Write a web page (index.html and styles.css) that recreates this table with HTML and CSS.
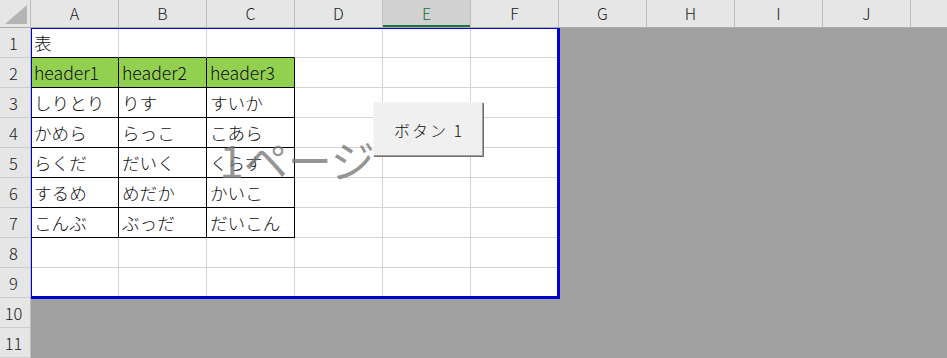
FILE: index.html
```html
<!DOCTYPE html>
<html lang="ja">
<head>
<meta charset="utf-8">
<title>Sheet</title>
<link rel="stylesheet" href="styles.css">
</head>
<body>
<div class="sheet">
  <div class="corner"><span class="tri"></span></div>
  <div class="colheads">
    <div class="ch">A</div><div class="ch">B</div><div class="ch">C</div><div class="ch">D</div>
    <div class="ch sel">E</div><div class="ch">F</div><div class="ch">G</div><div class="ch">H</div>
    <div class="ch">I</div><div class="ch">J</div><div class="ch"></div>
  </div>
  <div class="rowheads">
    <div class="rh">1</div><div class="rh">2</div><div class="rh">3</div><div class="rh">4</div>
    <div class="rh">5</div><div class="rh">6</div><div class="rh">7</div><div class="rh">8</div>
    <div class="rh">9</div><div class="rh">10</div><div class="rh">11</div>
  </div>
  <div class="area">
    <div class="page">
      <div class="c">表</div><div class="c"></div><div class="c"></div><div class="c"></div><div class="c"></div><div class="c"></div>
      <div class="c t hd">header1</div><div class="c t hd">header2</div><div class="c t hd">header3</div><div class="c"></div><div class="c"></div><div class="c"></div>
      <div class="c t">しりとり</div><div class="c t">りす</div><div class="c t">すいか</div><div class="c"></div><div class="c"></div><div class="c"></div>
      <div class="c t">かめら</div><div class="c t">らっこ</div><div class="c t">こあら</div><div class="c"></div><div class="c"></div><div class="c"></div>
      <div class="c t">らくだ</div><div class="c t">だいく</div><div class="c t">くらす</div><div class="c"></div><div class="c"></div><div class="c"></div>
      <div class="c t">するめ</div><div class="c t">めだか</div><div class="c t">かいこ</div><div class="c"></div><div class="c"></div><div class="c"></div>
      <div class="c t">こんぶ</div><div class="c t">ぶっだ</div><div class="c t">だいこん</div><div class="c"></div><div class="c"></div><div class="c"></div>
      <div class="c"></div><div class="c"></div><div class="c"></div><div class="c"></div><div class="c"></div><div class="c"></div>
      <div class="c"></div><div class="c"></div><div class="c"></div><div class="c"></div><div class="c"></div><div class="c"></div>
      <div class="pagenum">1ページ</div>
      <div class="button">ボタン 1</div>
    </div>
  </div>
</div>
</body>
</html>
```

FILE: styles.css
```css
html, body {
  margin: 0;
  padding: 0;
  background: #a0a0a0;
  overflow: hidden;
}
.sheet {
  width: 947px;
  height: 358px;
  display: grid;
  grid-template-columns: 31px 916px;
  grid-template-rows: 28px 330px;
  font-family: "Noto Sans CJK JP", "Noto Sans", sans-serif;
  overflow: hidden;
}
.corner {
  background: #e6e6e6;
  border-right: 1px solid #bdbdbd;
  border-bottom: 1px solid #ababab;
  box-sizing: border-box;
  position: relative;
}
.tri {
  position: absolute;
  left: 5px;
  top: 5px;
  width: 22px;
  height: 19px;
  background: #b4b4b4;
  clip-path: polygon(100% 0, 100% 100%, 0 100%);
}
.colheads {
  display: flex;
  background: #e6e6e6;
  border-bottom: 1px solid #ababab;
  box-sizing: border-box;
}
.ch {
  flex: 0 0 88px;
  box-sizing: border-box;
  border-right: 1px solid #bdbdbd;
  display: flex;
  align-items: center;
  justify-content: center;
  font-size: 16px;
  font-weight: 300;
  color: #222;
  line-height: 1;
  padding-bottom: 2px;
}
.ch.sel {
  background: #d2d2d2;
  color: #217346;
  box-shadow: inset 0 -2px 0 #217346;
}
.rowheads {
  display: flex;
  flex-direction: column;
  background: #e6e6e6;
  border-right: 1px solid #bdbdbd;
  box-sizing: border-box;
}
.rh {
  flex: 0 0 30px;
  box-sizing: border-box;
  border-bottom: 1px solid #cdcdcd;
  display: flex;
  align-items: center;
  justify-content: center;
  font-size: 16.5px;
  font-weight: 300;
  color: #222;
  padding-right: 3px;
}
.area {
  background: #a0a0a0;
}
.page {
  position: relative;
  width: 528px;
  display: grid;
  grid-template-columns: repeat(6, 88px);
  grid-template-rows: repeat(9, 30px);
  background: #fff;
}
.page::after {
  content: "";
  position: absolute;
  left: 0;
  top: 0;
  right: -1px;
  bottom: -1px;
  border-top: 1px solid #0000d0;
  border-left: 1px solid #0000d0;
  border-right: 3px solid #0000d0;
  border-bottom: 3px solid #0000d0;
  pointer-events: none;
}
.c {
  box-sizing: border-box;
  border-right: 1px solid #d4d4d4;
  border-bottom: 1px solid #d4d4d4;
  display: flex;
  align-items: flex-end;
  padding: 0 3px 3px;
  font-size: 17.6px;
  font-weight: 300;
  line-height: 22px;
  color: #111;
  white-space: nowrap;
}
.c.t {
  border-right-color: #000;
  border-bottom-color: #000;
}
.page > .c:nth-child(-n+3) {
  border-bottom-color: #000;
}
.c.hd {
  background: #92d050;
}
.pagenum {
  position: absolute;
  inset: 0;
  display: flex;
  align-items: center;
  justify-content: center;
  font-size: 44px;
  font-weight: 400;
  color: rgba(120, 120, 120, 0.8);
  padding: 0 0 8px 4px;
  pointer-events: none;
}
.button {
  position: absolute;
  left: 342px;
  top: 74px;
  width: 111px;
  height: 55px;
  box-sizing: border-box;
  background: #f0f0f0;
  border-top: 1px solid #f4f4f4;
  border-left: 1px solid #f4f4f4;
  box-shadow: inset -1px -1px 0 #6d6d6d, inset -2px -2px 0 #a0a0a0;
  display: flex;
  align-items: center;
  justify-content: center;
  font-size: 16px;
  font-weight: 300;
  letter-spacing: 2px;
  color: #111;
}
```
